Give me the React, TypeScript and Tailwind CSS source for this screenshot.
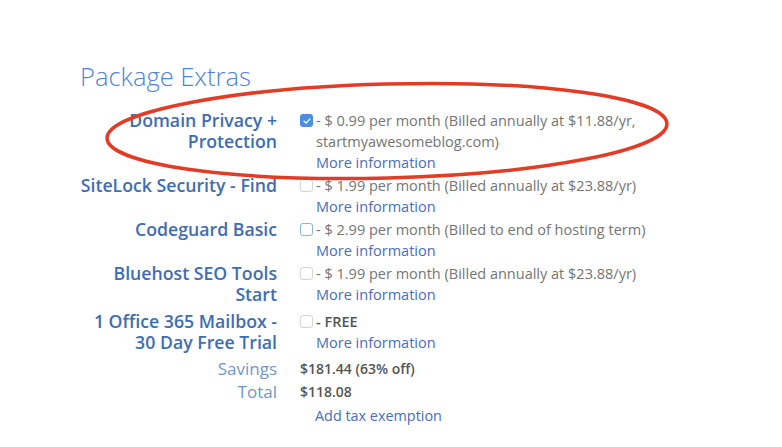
import React from "react";

const Check = ({ state }: { state: "checked" | "empty" | "focus" }) => {
  if (state === "checked") {
    return (
      <span className="mt-[4px] flex h-[13px] w-[13px] shrink-0 items-center justify-center rounded-[3px] bg-[#4a8fe7]">
        <svg viewBox="0 0 12 12" className="h-[10px] w-[10px]">
          <path d="M2.5 6.2 L5 8.5 L9.5 3.5" fill="none" stroke="white" strokeWidth="1.6" strokeLinecap="round" strokeLinejoin="round" />
        </svg>
      </span>
    );
  }
  if (state === "focus") {
    return <span className="mt-[4px] h-[13px] w-[13px] shrink-0 rounded-[3px] border-[1.5px] border-[#8fb0e8] bg-white" />;
  }
  return <span className="mt-[4px] h-[13px] w-[13px] shrink-0 rounded-[3px] border border-[#d4d4d4] bg-white" />;
};

type Row = {
  label: React.ReactNode;
  state: "checked" | "empty" | "focus";
  text: React.ReactNode;
  cls: string;
};

const rows: Row[] = [
  {
    label: (<>Domain Privacy +<br />Protection</>),
    state: "checked",
    text: (<>- $ 0.99 per month (Billed annually at $11.88/yr,<br />startmyawesomeblog.com)</>),
    cls: "",
  },
  {
    label: "SiteLock Security - Find",
    state: "empty",
    text: "- $ 1.99 per month (Billed annually at $23.88/yr)",
    cls: "mt-[2px]",
  },
  {
    label: "Codeguard Basic",
    state: "focus",
    text: "- $ 2.99 per month (Billed to end of hosting term)",
    cls: "mt-[2px]",
  },
  {
    label: (<>Bluehost SEO Tools<br />Start</>),
    state: "empty",
    text: "- $ 1.99 per month (Billed annually at $23.88/yr)",
    cls: "mt-[2px]",
  },
  {
    label: (<>1 Office 365 Mailbox -<br />30 Day Free Trial</>),
    state: "empty",
    text: <span className="font-semibold text-[#555]">- FREE</span>,
    cls: "mt-[6px]",
  },
];

export default function App() {
  return (
    <div className="relative h-[447px] w-[782px] overflow-hidden bg-white" style={{ fontFamily: '"Open Sans", sans-serif' }}>
      <div className="pl-[80px] pt-[60px]">
        <h2 className="text-[25.5px] font-light leading-[32px] text-[#4f84d8]">Package Extras</h2>
        <div className="mt-[18px] flex flex-col">
          {rows.map((r, i) => (
            <div key={i} className={`grid grid-cols-[197px_1fr] gap-x-[23px] ${r.cls}`}>
              <div className="text-right text-[17.7px] font-semibold leading-[21px] text-[#3e6db4]">{r.label}</div>
              <div className="flex gap-[3px]">
                <Check state={r.state} />
                <div className="text-[14.5px] leading-[21px] text-[#757575]">
                  <div>{r.text}</div>
                  <div className="text-[#4a6cc2]">More information</div>
                </div>
              </div>
            </div>
          ))}
          <div className="mt-[4px] grid grid-cols-[197px_1fr] gap-x-[23px]">
            <div className="text-right text-[17px] leading-[23px] text-[#7196cf]">Savings</div>
            <div className="text-[14px] font-semibold leading-[23px] text-[#555]">$181.44 (63% off)</div>
            <div className="text-right text-[17px] leading-[23px] text-[#7196cf]">Total</div>
            <div className="text-[14px] font-semibold leading-[23px] text-[#555]">$118.08</div>
            <div />
            <div className="pl-[15px] text-[14.4px] leading-[25px] text-[#4a6cc2]">Add tax exemption</div>
          </div>
        </div>
      </div>
      <svg className="pointer-events-none absolute left-0 top-0" width="782" height="447">
        <ellipse cx="387" cy="131" rx="280" ry="47" fill="none" stroke="#e43b26" strokeWidth="3.5" transform="rotate(-1.5 387 131)" />
      </svg>
    </div>
  );
}
